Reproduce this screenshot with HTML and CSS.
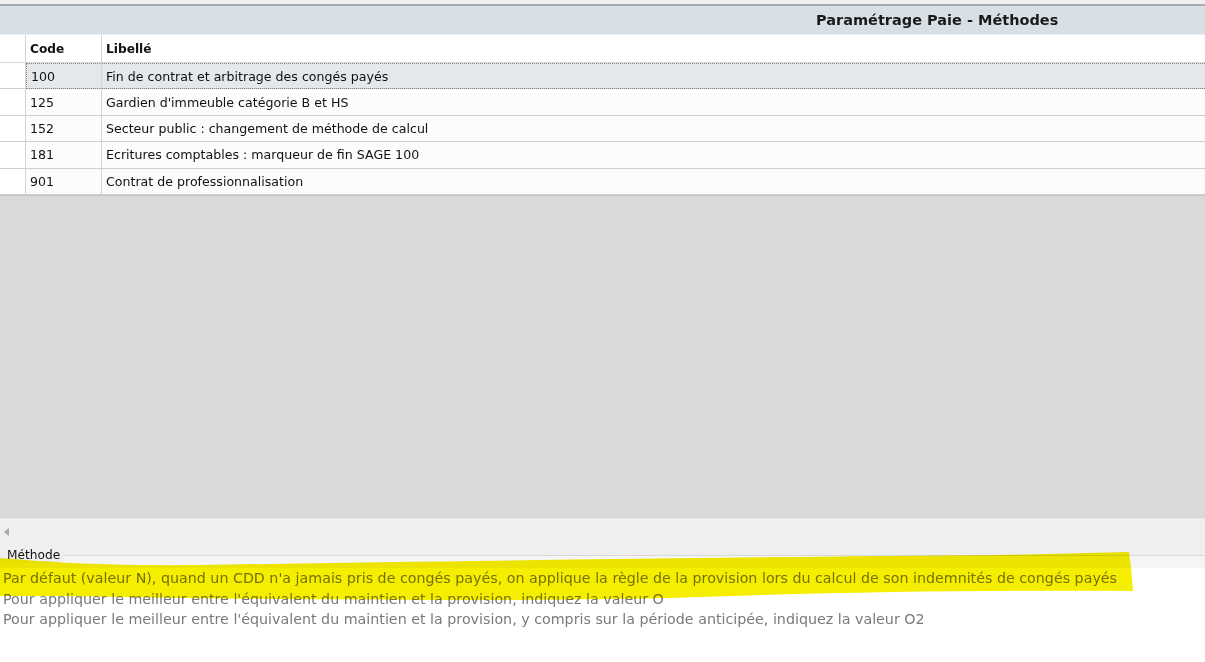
FILE: index.html
```html
<!DOCTYPE html>
<html lang="fr">
<head>
    <meta charset="UTF-8">
    <title>Paramétrage Paie - Méthodes</title>
    <link rel="stylesheet" href="styles.css">
</head>
<body>
    <div class="top-strip"></div>
    <div class="title-bar">
        <h1>Paramétrage Paie - Méthodes</h1>
    </div>

    <!-- Liste des méthodes -->
    <div class="grid">
        <div class="row head">
            <div class="cell ind"></div>
            <div class="cell code">Code</div>
            <div class="cell label">Libellé</div>
        </div>
        <div class="row selected">
            <div class="cell ind"></div>
            <div class="cell code">100</div>
            <div class="cell label">Fin de contrat et arbitrage des congés payés</div>
        </div>
        <div class="row">
            <div class="cell ind"></div>
            <div class="cell code">125</div>
            <div class="cell label">Gardien d'immeuble catégorie B et HS</div>
        </div>
        <div class="row">
            <div class="cell ind"></div>
            <div class="cell code">152</div>
            <div class="cell label">Secteur public : changement de méthode de calcul</div>
        </div>
        <div class="row">
            <div class="cell ind"></div>
            <div class="cell code">181</div>
            <div class="cell label">Ecritures comptables : marqueur de fin SAGE 100</div>
        </div>
        <div class="row">
            <div class="cell ind"></div>
            <div class="cell code">901</div>
            <div class="cell label">Contrat de professionnalisation</div>
        </div>
        <div class="grid-empty"></div>
    </div>

    <div class="hscroll">
        <span class="arrow-left"></span>
    </div>

    <!-- Détail -->
    <div class="detail-label">
        <span>Méthode</span>
    </div>
    <div class="detail">
        <p>Par défaut (valeur N), quand un CDD n'a jamais pris de congés payés, on applique la règle de la provision lors du calcul de son indemnités de congés payés</p>
        <p>Pour appliquer le meilleur entre l'équivalent du maintien et la provision, indiquez la valeur O</p>
        <p>Pour appliquer le meilleur entre l'équivalent du maintien et la provision, y compris sur la période anticipée, indiquez la valeur O2</p>
    </div>

    <!-- surlignage jaune fait à la main -->
    <svg class="highlight" width="1205" height="662" viewBox="0 0 1205 662">
        <path d="M0 558 C50 562 100 566 200 565 C450 561 750 557 1000 555 L1129 552 C1131 565 1132 578 1133 591 C1000 590 850 592 700 597 C550 602 300 600 120 597 C60 596 20 596 0 596 Z" fill="#f6ee00"/>
    </svg>
</body>
</html>
```

FILE: styles.css
```css
body {
    margin: 0;
    width: 1205px;
    height: 662px;
    overflow: hidden;
    display: flex;
    flex-direction: column;
    font-family: "DejaVu Sans", Verdana, sans-serif;
    background-color: #fff;
    color: #111;
}

.top-strip {
    height: 4px;
    background-color: #eef0f2;
    border-bottom: 2px solid #a4a9ae;
}

.title-bar {
    height: 28px;
    background-color: #d8e0e6;
    border-bottom: 1px solid #eef1f3;
    display: flex;
    align-items: center;
}

.title-bar h1 {
    margin: 0;
    padding-left: 816px;
    font-size: 14.5px;
    font-weight: bold;
    color: #1a1a1a;
}

.grid {
    flex: 1;
    display: flex;
    flex-direction: column;
    background-color: #d9d9d9;
}

.row {
    display: grid;
    grid-template-columns: 26px 76px 1fr;
    height: 25.4px;
    background-color: #fcfcfc;
    border-bottom: 1px solid #cfcfcf;
    font-size: 12.6px;
}

.row.head {
    height: 27px;
    background-color: #fff;
    border-bottom: 1px solid #d6d6d6;
    font-weight: bold;
    font-size: 12.2px;
}

.row.selected {
    background-color: #e4e8ea;
}

.row.selected .code,
.row.selected .label {
    border-top: 1px dotted #888;
    border-bottom: 1px dotted #888;
    margin-bottom: -1px;
}

.row.selected .code {
    border-left: 1px dotted #888;
}

.cell {
    display: flex;
    align-items: center;
    padding-left: 4px;
    border-right: 1px solid #d4d4d4;
    white-space: nowrap;
}

.cell.ind {
    padding: 0;
    background-color: #fff;
}

.cell.label {
    border-right: none;
}

.grid-empty {
    flex: 1;
    border-top: 1px solid #c6c6c6;
}

.hscroll {
    flex: 0 0 26px;
    background-color: #efefef;
    border-top: 1px solid #e6e6e6;
    display: flex;
    align-items: center;
    padding-left: 4px;
}

.arrow-left {
    width: 0;
    height: 0;
    border-top: 4px solid transparent;
    border-bottom: 4px solid transparent;
    border-right: 5px solid #a8a8a8;
}

.detail-label {
    flex: 0 0 23px;
    background: linear-gradient(#efefef 0, #efefef 10px, #d8d8d8 10px, #d8d8d8 11px, #f5f5f5 11px);
    display: flex;
    align-items: flex-start;
}

.detail-label span {
    font-size: 12.2px;
    color: #111;
    padding: 2px 3px 0 7px;
    background-color: #efefef;
    line-height: 16px;
}

.detail {
    flex: 0 0 94px;
    background-color: #fff;
    padding-top: 0;
}

.detail p {
    margin: 0;
    font-size: 14.25px;
    line-height: 20.5px;
    color: #7a7a7a;
    padding-left: 3px;
    white-space: nowrap;
}

.highlight {
    position: absolute;
    left: 0;
    top: 0;
    mix-blend-mode: multiply;
    pointer-events: none;
}
```
